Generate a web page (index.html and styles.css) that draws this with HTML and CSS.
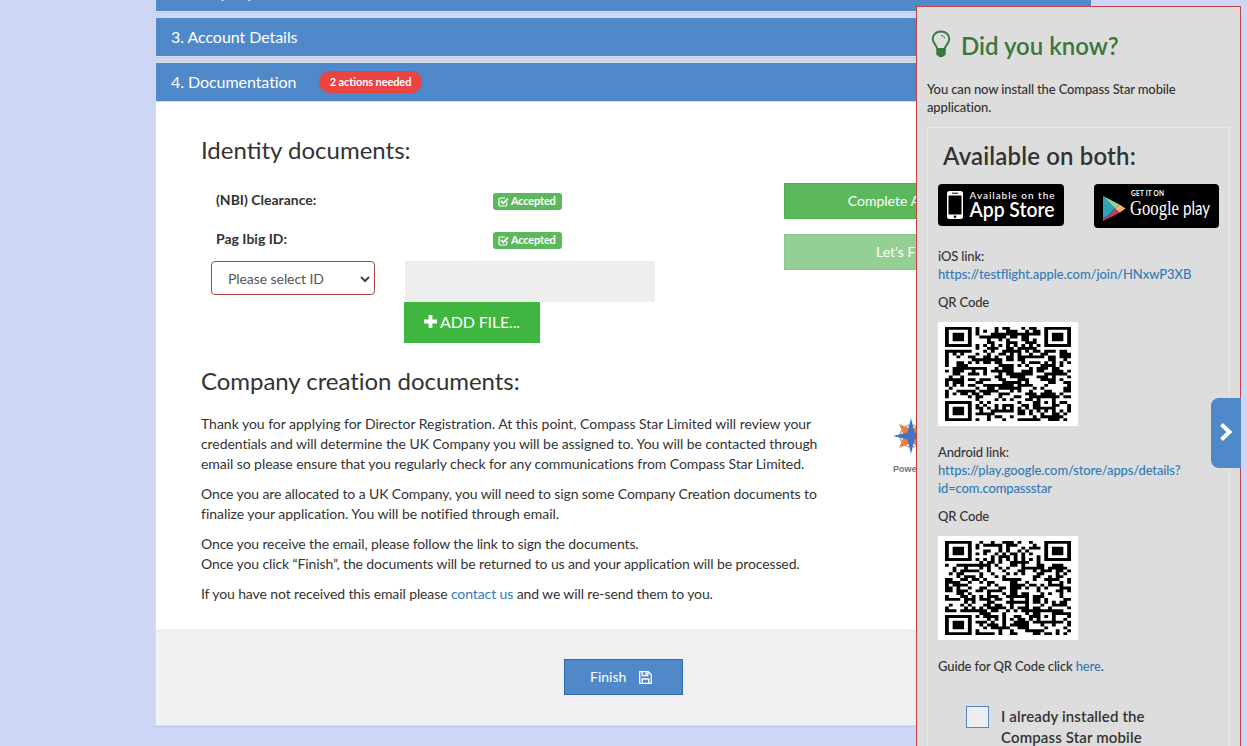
FILE: index.html
```html
<!DOCTYPE html>
<html lang="en">
<head>
<meta charset="utf-8">
<title>Compass Star - Registration</title>
<link rel="stylesheet" href="styles.css">
</head>
<body>
<main class="accordion">
  <div class="bar bar-cut">2. Company Details</div>
  <div class="bar">3. Account Details</div>
  <section class="panel">
    <div class="bar bar-open"><span class="t-doc">4. Documentation</span><span class="pill">2 actions needed</span></div>
    <div class="content">
      <h2>Identity documents:</h2>
      <div class="identity">
        <div class="ids">
          <div class="id-row"><span class="id-name">(NBI) Clearance:</span><span class="tag"><svg class="check" viewBox="0 0 11 11"><path d="M8.8 6v2.8q0 1.2-1.2 1.2H2.200Q1 10 1 8.800V3.200Q1 2 2.200 2H7" fill="none" stroke="#fff" stroke-width="1.200"/><path d="M3 5l2.300 2.300L10 2.500" fill="none" stroke="#fff" stroke-width="1.800"/></svg>Accepted</span></div>
          <div class="id-row"><span class="id-name">Pag Ibig ID:</span><span class="tag"><svg class="check" viewBox="0 0 11 11"><path d="M8.8 6v2.8q0 1.2-1.2 1.2H2.200Q1 10 1 8.800V3.200Q1 2 2.200 2H7" fill="none" stroke="#fff" stroke-width="1.200"/><path d="M3 5l2.300 2.300L10 2.500" fill="none" stroke="#fff" stroke-width="1.800"/></svg>Accepted</span></div>
          <div class="upload">
            <div class="select"><span>Please select ID</span><svg width="10" height="7" viewBox="0 0 10 7"><path d="M1 1l4 4 4-4" fill="none" stroke="#444" stroke-width="2"/></svg></div>
            <div class="file"><div class="file-name"></div><div class="add"><svg width="13" height="13" viewBox="0 0 13 13"><path d="M6.500 0v13M0 6.500h13" stroke="#fff" stroke-width="3.800"/></svg><span>ADD FILE...</span></div></div>
          </div>
        </div>
        <div class="actions"><div class="action">Complete Application</div><div class="action faded">Let's Finish It</div></div>
      </div>
      <h2 class="second">Company creation documents:</h2>
      <div class="company">
        <div class="copy">
          <p><span class="snug-1">Thank you for applying for Director Registration. At this point, Compass Star Limited will review your</span><br><span class="snug-2">credentials and will determine the UK Company you will be assigned to. You will be contacted through</span><br><span class="snug-2">email so please ensure that you regularly check for any communications from Compass Star Limited.</span></p>
          <p><span class="snug-3">Once you are allocated to a UK Company, you will need to sign some Company Creation documents to</span><br><span class="snug-1">finalize your application. You will be notified through email.</span></p>
          <p class="snug-3">Once you receive the email, please follow the link to sign the documents.<br>Once you click “Finish”, the documents will be returned to us and your application will be processed.</p>
          <p class="snug-3">If you have not received this email please <a>contact us</a> and we will re-send them to you.</p>
        </div>
        <div class="powered">
          <svg width="38" height="38" viewBox="0 0 38 38"><circle cx="19" cy="19" r="11" fill="none" stroke="#a9b0bb" stroke-width="1.500"/><path d="M7 7l12 5 12-5-5 12 5 12-12-5-12 5 5-12z" fill="#ee8038"/><path d="M19 1l3.500 14.500 14.500 3.500-14.500 3.500L19 37l-3.500-14.500L1 19l14.500-3.500z" fill="#4472c4"/></svg>
          <span>Powered by</span>
        </div>
      </div>
    </div>
    <footer class="foot"><div class="finish"><span>Finish</span><svg width="13" height="13" viewBox="0 0 13 13"><path d="M.7.7h8.600l3 3v8.600H.7zM3.200.7v4h5.600v-4M3.200 12.300V8h6.600v4.300" fill="none" stroke="#fff" stroke-width="1.300"/><path d="M6.300 1.500h1.500v2.300H6.300z" fill="#fff"/></svg></div></footer>
  </section>
</main>

<aside class="tips">
  <div class="tips-head">
    <svg width="20" height="28" viewBox="0 0 20 28"><path d="M6.300 19C6 15.500 1.700 13.500 1.700 8.800 1.700 4.500 5.500 1.500 10 1.500s8.300 3 8.300 7.300c0 4.700-4.300 6.700-4.600 10.200z" fill="none" stroke="#3c763d" stroke-width="1.900"/><path d="M10 5.500c2 0 3.500 1 3.500 2.700" fill="none" stroke="#3c763d" stroke-width="1"/><path d="M5.300 18.500h9.400v6.300l-2.200 1.400Q10 28.500 7.500 26.200l-2.200-1.400z" fill="#3c763d"/></svg>
    <h3>Did you know?</h3>
  </div>
  <p class="lead">You can now install the Compass Star mobile<br>application.</p>
  <div class="box">
    <h3 class="avail">Available on both:</h3>
    <div class="stores">
      <svg class="apple" width="126" height="42" viewBox="0 0 126 42"><rect width="126" height="42" rx="4"/><rect x="9" y="7" width="16" height="28" rx="2.500" fill="#fff"/><path d="M10.500 11.500h13v19h-13z"/><path d="M14 9.200h6" stroke="#000"/><circle cx="17" cy="32.700" r="1.300"/><text x="31.500" y="15" class="store-small" textLength="85">Available on the</text><text x="31.500" y="33" class="store-big" textLength="85" lengthAdjust="spacingAndGlyphs">App Store</text></svg>
      <svg class="play" width="125" height="44" viewBox="0 0 125 44"><rect width="125" height="44" rx="4"/><path d="M9 12v25l12-12.500z" fill="#2aa5b5"/><path d="M9 12l12 12.500 4.500-4z" fill="#9bcf9a"/><path d="M25.500 20.500L21 24.500l4.500 4.200 6-4.200z" fill="#f6b26b"/><path d="M9 37l12-12.500 4.500 4.200z" fill="#c43b67"/><path d="M9 37l3-3.100V31L9 33z" fill="#80529c"/><text x="37" y="12" class="get" textLength="33">GET IT ON</text><text x="36" y="31" class="google" textLength="49" lengthAdjust="spacingAndGlyphs">Google</text><text x="89" y="31" class="gplay" textLength="27" lengthAdjust="spacingAndGlyphs">play</text></svg>
    </div>
    <p>iOS link:<br><a class="ios">https://testflight.apple.com/join/HNxwP3XB</a></p>
    <p>QR Code</p>
    <svg class="qr" data-seed="71" viewBox="0 0 140 104"></svg>
    <p class="android">Android link:<br><a>https://play.google.com/store/apps/details?<br>id=com.compassstar</a></p>
    <p>QR Code</p>
    <svg class="qr" data-seed="2903" viewBox="0 0 140 104"></svg>
    <p class="guide">Guide for QR Code click <a>here</a>.</p>
    <div class="installed"><span class="checkbox"></span><span class="installed-text">I already installed the<br>Compass Star mobile</span></div>
  </div>
</aside>
<div class="toggle"><svg width="15" height="20" viewBox="0 0 15 20"><path d="M2.500 2.500L10.500 10l-8 7.500" fill="none" stroke="#fff" stroke-width="4"/></svg></div>
<script src="qr.js"></script>
</body>
</html>
```
FILE: styles.css
```css
* { box-sizing: border-box; }
html, body { height: 746px; overflow: hidden; }
body { margin: 0; background: #cdd6f5; color: #333; font: 14px/20px Lato, sans-serif; }
h2, h3, p { margin: 0; }
a { color: #337ab7; }

.accordion { width: 937px; margin-left: 155px; }
.bar { height: 40px; padding: 0 15px; margin-bottom: 5px; border: 1px solid #ddd; background: #4f89ca; background-clip: padding-box; color: #fff; font-size: 16px; line-height: 38px; letter-spacing: -.06px; box-shadow: 0 1px 1px rgba(0,0,0,.05); }
.bar-cut { margin-top: -28px; }
.panel { border: 1px solid #ddd; border-top: 0; height: 664px; background: #fff; box-shadow: 0 1px 1px rgba(0,0,0,.05); }
.bar-open { display: flex; align-items: center; height: 40px; margin: 0 -1px; box-shadow: none; }
.t-doc { width: 148px; }
.pill { height: 22px; width: 103px; border-radius: 11px; background: #e94442; font-size: 11px; font-weight: 700; line-height: 22px; text-align: center; letter-spacing: -.1px; }

.content { height: 527px; padding: 33px 45px 0; }
h2 { height: 29px; font-size: 24px; font-weight: 400; line-height: 29px; white-space: nowrap; }
.identity { display: flex; height: 178px; margin-top: 17px; }
.ids { width: 583px; }
.id-row { display: flex; align-items: center; height: 39px; padding-left: 15px; }
.id-name { width: 277px; margin-top: -2px; font-weight: 700; font-size: 14px; }
.tag { display: flex; align-items: center; width: 69px; height: 17px; margin-top: 1px; padding-left: 5px; gap: 2px; border-radius: 3px; background: #5cb85c; color: #fff; font-size: 11px; font-weight: 700; letter-spacing: -.18px; }
.check { width: 11px; height: 11px; }
.upload { display: flex; margin: 2px 0 0 10px; }
.select { display: flex; align-items: center; justify-content: space-between; width: 164px; height: 34px; margin-right: 29px; padding: 2px 4px 0 16px; border: 1px solid #a94442; border-radius: 4px; color: #555; letter-spacing: -.07px; }
.file-name { width: 250px; height: 41px; margin-left: 1px; background: #eee; }
.add { display: flex; align-items: center; gap: 3px; width: 136px; height: 41px; padding: 0 0 2px 20px; background: #3fb63f; color: #fff; font-size: 16px; letter-spacing: -.15px; }
.actions { display: flex; flex-direction: column; flex: none; gap: 15px; width: 260px; padding-top: 2px; }
.action { height: 36px; border: 1px solid #4cae4c; background: #5cb85c; color: #fff; line-height: 34px; text-align: center; }
.faded { opacity: .65; padding-left: 4px; }
.second { margin-top: 7px; letter-spacing: -.04px; }
.company { display: flex; margin-top: 19px; }
.copy { width: 690px; white-space: nowrap; }
.copy p { margin-bottom: 10px; }
.snug-1 { letter-spacing: -.025px; }
.snug-2 { letter-spacing: -.065px; }
.snug-3 { letter-spacing: -.11px; }
.powered { padding-top: 3px; color: #777; font: 700 9px/12px "Liberation Sans", sans-serif; }
.powered svg { display: block; margin: 0 0 8px 1px; }
.powered span { margin-left: 2px; }
.foot { display: flex; justify-content: center; height: 96px; padding-top: 30px; background: #f0f0f3; }
.finish { display: flex; align-items: center; gap: 13px; width: 119px; height: 36px; padding-left: 25px; border: 1px solid #2e6da4; background: #4f89ca; color: #fff; }

/* Slide-out tips drawer over the page */
.tips { position: absolute; left: 916px; top: 6px; width: 325px; height: 740px; overflow: hidden; padding: 0 10px; border: 1px solid #c04545; border-bottom: 0; background: #ddd; font-size: 13px; line-height: 18px; white-space: nowrap; }
.tips-head { display: flex; gap: 10px; height: 54px; padding: 23px 0 0 4px; color: #3c763d; }
h3 { font-size: 24px; font-weight: 600; line-height: 32px; }
.lead { margin-top: 19px; font-weight: 500; letter-spacing: -.13px; }
.box { width: 303px; margin-top: 11px; padding: 12px 10px 0; border: 1px solid #e7e7e7; border-bottom: 0; }
.box p { margin-bottom: 10px; font-weight: 500; letter-spacing: -.13px; }
.box p .ios { letter-spacing: -.07px; }
.avail { padding-left: 5px; letter-spacing: .15px; }
.stores { display: flex; gap: 30px; height: 63px; margin-top: 12px; }
.store-small { fill: #fff; font: 500 10px Lato, sans-serif; }
.store-big { fill: #fff; font: 600 21px Lato, sans-serif; }
.get { fill: #fff; font: 700 6.5px Lato, sans-serif; }
.google { fill: #fff; font: 20px "Liberation Serif", serif; }
.gplay { fill: #fff; font: 400 19px Lato, sans-serif; }
.qr { display: block; width: 140px; height: 104px; margin-top: 11px; background: #fff; }
.box .android { margin-top: 17px; }
.box .guide { margin-top: 17px; }
.installed { display: flex; gap: 12px; margin: 31px 0 0 28px; }
.checkbox { width: 23px; height: 22px; border: 1px solid #4f89ca; background: #eee; }
.installed-text { height: 40px; font-size: 15px; font-weight: 600; line-height: 21px; letter-spacing: .13px; }

.toggle { position: absolute; left: 1211px; top: 398px; width: 30px; height: 70px; padding: 24px 0 0 8px; border-radius: 8px 0 0 8px; background: #4f89ca; }
```
FILE: qr.js
```js
// Draws 33x33 module codes with finder, timing and alignment marks.
document.querySelectorAll('.qr').forEach(function (svg) {
  var n = 33, w = 126 / n, h = 94 / n, s = +svg.dataset.seed, d = '';
  function ring(x, y, cx, cy) { return Math.max(Math.abs(x - cx), Math.abs(y - cy)); }
  for (var y = 0; y < n; y++) for (var x = 0; x < n; x++) {
    s = (s * 1103515245 + 12345) % 2147483648;
    var on = (s / 65536 & 1) === 1, r = Math.min(ring(x, y, 3, 3), ring(x, y, 29, 3), ring(x, y, 3, 29));
    if (r < 5) on = r < 2 || r === 3;
    else if (x === 6 || y === 6) on = (x + y) % 2 === 0;
    else if (ring(x, y, 26, 26) < 3) on = ring(x, y, 26, 26) !== 1;
    if (on) d += 'M' + (7 + x * w) + ' ' + (5 + y * h) + 'h' + w + 'v' + h + 'h' + -w + 'z';
  }
  var p = document.createElementNS('http://www.w3.org/2000/svg', 'path');
  p.setAttribute('d', d);
  svg.appendChild(p);
});
```
